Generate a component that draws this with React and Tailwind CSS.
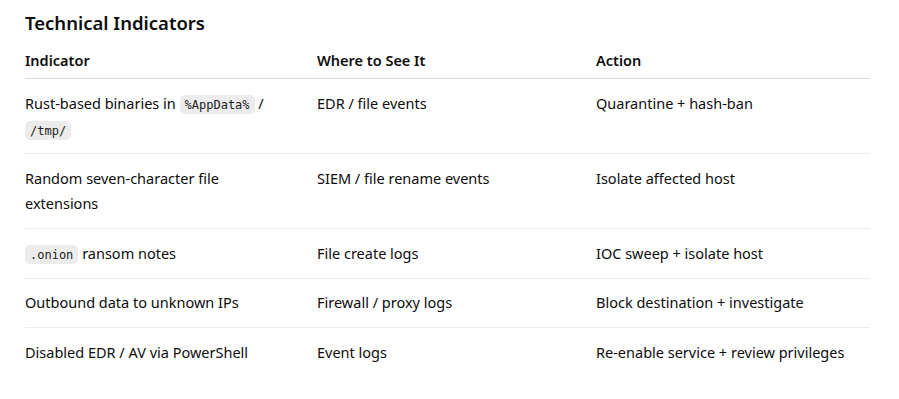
import React from 'react';

const Code = ({ children }) => (
  <code className="rounded-[5px] bg-[#ececec] px-[5px] py-[2.5px] font-['DejaVu_Sans_Mono',monospace] text-[12px] leading-none text-[#222]">
    {children}
  </code>
);

const rows = [
  {
    indicator: (
      <>
        Rust-based binaries in <Code>%AppData%</Code> / <Code>/tmp/</Code>
      </>
    ),
    where: 'EDR / file events',
    action: 'Quarantine + hash-ban',
  },
  {
    indicator: 'Random seven-character file extensions',
    where: 'SIEM / file rename events',
    action: 'Isolate affected host',
  },
  {
    indicator: (
      <>
        <Code>.onion</Code> ransom notes
      </>
    ),
    where: 'File create logs',
    action: 'IOC sweep + isolate host',
  },
  {
    indicator: 'Outbound data to unknown IPs',
    where: 'Firewall / proxy logs',
    action: 'Block destination + investigate',
  },
  {
    indicator: 'Disabled EDR / AV via PowerShell',
    where: 'Event logs',
    action: 'Re-enable service + review privileges',
  },
];

export default function App() {
  return (
    <div className="min-h-[399px] bg-white px-[25px] pt-[10px] font-['Noto_Sans',sans-serif] text-[14.5px] text-[#0d0d0d]">
      <h2 className="mb-[12px] text-[18.5px] font-semibold leading-[26px]">Technical Indicators</h2>
      <table className="w-[845px] table-fixed border-collapse text-left">
        <colgroup>
          <col className="w-[292px]" />
          <col className="w-[279px]" />
          <col />
        </colgroup>
        <thead>
          <tr className="border-b border-[#d9d9d9]">
            <th className="pb-[5px] pr-[28px] font-semibold leading-[25px]">Indicator</th>
            <th className="pb-[5px] pr-4 font-semibold leading-[25px]">Where to See It</th>
            <th className="pb-[5px] pr-4 font-semibold leading-[25px]">Action</th>
          </tr>
        </thead>
        <tbody>
          {rows.map((r, i) => (
            <tr key={i} className={i < rows.length - 1 ? 'border-b border-[#ececec]' : ''}>
              <td className="py-[11.5px] pr-[28px] align-top leading-[25.5px]">{r.indicator}</td>
              <td className="py-[11.5px] pr-4 align-top leading-[25.5px]">{r.where}</td>
              <td className="py-[11.5px] pr-4 align-top leading-[25.5px]">{r.action}</td>
            </tr>
          ))}
        </tbody>
      </table>
    </div>
  );
}
